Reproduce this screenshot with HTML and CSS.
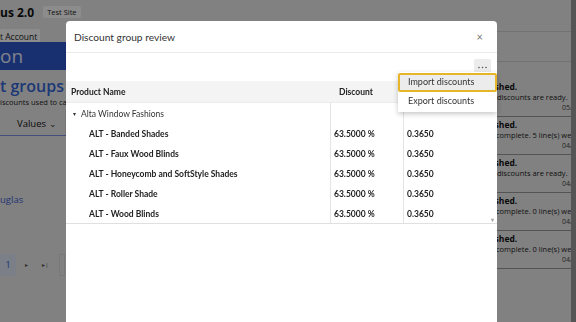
FILE: index.html
```html
<!DOCTYPE html>
<html>
<head>
<meta charset="utf-8">
<link rel="stylesheet" href="styles.css">
</head>
<body>
<div class="page">
  <div class="main">
    <div class="topbar">
      <span class="brand">us 2.0</span>
      <span class="badge">Test Site</span>
    </div>
    <div class="acct"><span class="badge badge-lg">t Account</span></div>
    <div class="banner">on</div>
    <div class="ptitle">t groups</div>
    <div class="psub">iscounts used to calculate prices</div>
    <div class="filters">
      <span class="values">Values <span class="chev">&#8964;</span></span>
      <span class="search">&#9906;</span>
    </div>
    <div class="list">
      <a class="link">uglas</a>
    </div>
    <div class="pager">
      <span class="pg-cur">1</span>
      <span class="pg-btn">&#9656;</span>
      <span class="pg-btn">&#9656;|</span>
      <span class="pg-box"></span>
    </div>
  </div>
  <div class="notes">
    <div class="notes-head"></div>
    <div class="notes-sub"></div>
    <div class="note">
      <div class="n-title">Import finished.</div>
      <div class="n-msg ready">Your new discounts are ready.</div>
      <div class="n-date">05/02/2024 10:21 AM</div>
    </div>
    <div class="note">
      <div class="n-title">Import finished.</div>
      <div class="n-msg">Import status: complete. 5 line(s) were imported.</div>
      <div class="n-date">04/30/2024 09:12 AM</div>
    </div>
    <div class="note">
      <div class="n-title">Import finished.</div>
      <div class="n-msg ready">Your new discounts are ready.</div>
      <div class="n-date">04/29/2024 03:40 PM</div>
    </div>
    <div class="note">
      <div class="n-title">Import finished.</div>
      <div class="n-msg">Import status: complete. 0 line(s) were imported.</div>
      <div class="n-date">04/29/2024 03:38 PM</div>
    </div>
    <div class="note">
      <div class="n-title">Import finished.</div>
      <div class="n-msg">Import status: complete. 0 line(s) were imported.</div>
      <div class="n-date">04/29/2024 03:35 PM</div>
    </div>
  </div>
  <div class="vscroll"></div>
</div>

<div class="overlay">
  <div class="modal">
    <div class="m-head">
      <span class="m-title">Discount group review</span>
      <span class="m-close">&#215;</span>
    </div>
    <div class="m-tools">
      <span class="more"><svg width="9" height="3" viewBox="0 0 9 3"><circle cx="1" cy="1.5" r="0.8" fill="#555"/><circle cx="4.5" cy="1.5" r="0.8" fill="#555"/><circle cx="8" cy="1.5" r="0.8" fill="#555"/></svg></span>
    </div>
    <div class="grid">
      <div class="g-row g-head">
        <div class="c1">Product Name</div>
        <div class="c2">Discount</div>
        <div class="c3">Multiplier</div>
      </div>
      <div class="g-row g-group">
        <div class="c1"><span class="caret">&#9662;</span>Alta Window Fashions</div>
        <div class="c2"></div>
        <div class="c3"></div>
      </div>
      <div class="g-row">
        <div class="c1 item">ALT - Banded Shades</div>
        <div class="c2">63.5000 %</div>
        <div class="c3">0.3650</div>
      </div>
      <div class="g-row">
        <div class="c1 item">ALT - Faux Wood Blinds</div>
        <div class="c2">63.5000 %</div>
        <div class="c3">0.3650</div>
      </div>
      <div class="g-row">
        <div class="c1 item">ALT - Honeycomb and SoftStyle Shades</div>
        <div class="c2">63.5000 %</div>
        <div class="c3">0.3650</div>
      </div>
      <div class="g-row">
        <div class="c1 item">ALT - Roller Shade</div>
        <div class="c2">63.5000 %</div>
        <div class="c3">0.3650</div>
      </div>
      <div class="g-row">
        <div class="c1 item">ALT - Wood Blinds</div>
        <div class="c2">63.5000 %</div>
        <div class="c3">0.3650<span class="sarrow">&#9662;</span></div>
      </div>
    </div>
    <div class="menu">
      <div class="mi mi-focus">Import discounts</div>
      <div class="mi">Export discounts</div>
    </div>
  </div>
</div>
</body>
</html>
```
FILE: styles.css
```css
* { box-sizing: border-box; }
html, body { margin: 0; padding: 0; }
body {
  width: 576px;
  height: 322px;
  overflow: hidden;
  font-family: "Open Sans", "Noto Sans", sans-serif;
  background: #ececec;
  color: #111;
}
.page {
  display: flex;
  width: 576px;
  height: 322px;
  overflow: hidden;
}
.main {
  width: 440px;
  flex: none;
  display: flex;
  flex-direction: column;
}
.topbar {
  height: 19px;
  display: flex;
  align-items: center;
  gap: 9px;
  padding-top: 5px;
}
.brand { font-weight: 700; font-size: 12px; }
.badge {
  background: #fff;
  font-size: 7.5px;
  padding: 1px 4px;
  border-radius: 2px;
  color: #222;
}
.badge-lg { font-size: 8.5px; padding: 2px 3px 2px 0; }
.acct { height: 23px; padding-top: 4px; }
.banner {
  height: 28px;
  background: #2c58cc;
  color: #e8ecff;
  font-size: 19px;
  line-height: 28px;
}
.ptitle {
  margin-top: 5px;
  font-size: 16px;
  font-weight: 600;
  color: #3566d8;
  line-height: 22px;
}
.psub { font-size: 7.5px; color: #222; line-height: 10px; }
.filters {
  margin-top: 4px;
  height: 25px;
  border-bottom: 1px solid #7b8ee0;
  display: flex;
  align-items: center;
  gap: 8px;
  padding-left: 17px;
}
.values { font-size: 9.5px; color: #111; }
.chev { font-size: 9px; color: #333; }
.search {
  width: 60px;
  height: 24px;
  border: 1px solid #d8d8d8;
  font-size: 9px;
  padding: 4px 2px;
  color: #333;
}
.list { height: 118px; padding-top: 50px; }
.link { color: #3b5fd0; font-size: 9.5px; }
.pager {
  display: flex;
  align-items: center;
  height: 22px;
}
.pg-cur {
  width: 16px;
  height: 22px;
  background: #dfe8f8;
  color: #3760c8;
  font-size: 9px;
  text-align: center;
  line-height: 22px;
}
.pg-btn { font-size: 6px; color: #555; width: 17px; text-align: center; margin-left: 2px; }
.pg-box { width: 6px; height: 22px; border: 1px solid #ddd; margin-left: 5px; }

.notes {
  flex: none;
  width: 131px;
  overflow: hidden;
  white-space: nowrap;
}
.notes-head { height: 32px; border-bottom: 1px solid #d0d0d0; }
.notes-sub { height: 30px; border-bottom: 1px solid #d0d0d0; margin-bottom: 17px; }
.note {
  height: 38px;
  border-bottom: 1px solid #9a9a9a;
  padding-top: 2px;
}
.n-title { font-weight: 700; font-size: 8.5px; line-height: 11px; margin-left: 9px; }
.n-msg { font-size: 7.5px; line-height: 11px; color: #222; margin-left: 5px; }
.n-msg.ready { margin-left: 22px; }
.n-date { font-size: 7px; line-height: 9px; color: #444; padding-left: 122px; }
.vscroll { flex: none; width: 5px; background: #9c9c9c; }

.overlay {
  position: fixed;
  inset: 0;
  background: rgba(0, 0, 0, 0.45);
}
.modal {
  position: absolute;
  left: 66px;
  top: 21px;
  width: 431px;
  height: 320px;
  background: #fff;
  border-radius: 4px;
  font-family: Lato, "Open Sans", sans-serif;
}
.m-head {
  height: 32px;
  border-bottom: 1px solid #ebebeb;
  display: flex;
  align-items: center;
  justify-content: space-between;
  padding: 0 14px 0 8px;
}
.m-title { font-size: 10.2px; color: #333; }
.m-close { font-size: 11px; color: #777; }
.m-tools {
  height: 28px;
  display: flex;
  justify-content: flex-end;
  padding: 6px 6px 0 0;
}
.more {
  width: 17px;
  height: 17px;
  background: #ececec;
  border-radius: 2px;
  display: flex;
  align-items: center;
  justify-content: center;
}
.grid { border-bottom: 1px solid #e0e0e0; }
.g-row {
  display: grid;
  grid-template-columns: 264px 73px 1fr;
  height: 20px;
  font-size: 8.5px;
  color: #222;
}
.g-row > div { display: flex; align-items: center; white-space: nowrap; padding-top: 1px; }
.g-head {
  height: 22px;
  background: #f4f4f4;
  font-weight: 700;
  border-bottom: 1px solid #ececec;
}
.g-head > div { padding-top: 0; }
.g-head .c1 { padding-left: 5px; }
.g-head .c2 { padding-left: 9px; }
.g-head .c3 { padding-left: 4px; }
.g-row:not(.g-head) .c2, .g-row:not(.g-head) .c3 { border-left: 1px solid #e4e4e4; }
.c2, .c3 { padding-left: 3px; }
.c1.item { padding-left: 23px; font-weight: 700; }
.g-row:not(.g-head):not(.g-group) .c2, .g-row:not(.g-head):not(.g-group) .c3 { font-weight: 700; }
.g-group .c1 { padding-left: 7px; color: #333; }
.caret { font-size: 6px; margin-right: 5px; color: #333; }
.c3 { position: relative; }
.sarrow {
  position: absolute;
  right: 3px;
  bottom: 0;
  font-size: 6px;
  color: #aaa;
}
.menu {
  position: absolute;
  left: 332px;
  top: 51px;
  width: 99px;
  background: #fff;
  box-shadow: 0 2px 5px rgba(0, 0, 0, 0.22);
  padding: 1px 0 2px;
}
.mi {
  height: 18px;
  font-size: 9px;
  line-height: 18px;
  padding-left: 10px;
  color: #333;
}
.mi-focus {
  background: #ececec;
  border: 2px solid #e6b52a;
  border-radius: 2px;
  line-height: 14px;
  padding-left: 8px;
  height: 19px;
}
```
